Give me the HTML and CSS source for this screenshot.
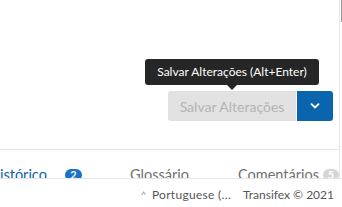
FILE: index.html
```html
<!DOCTYPE html>
<html lang="pt">
<head>
<meta charset="utf-8">
<link rel="stylesheet" href="styles.css">
</head>
<body>
<div class="page">
  <div class="panel">
    <div class="actions">
      <div class="btn-group">
        <div class="tooltip">Salvar Alterações (Alt+Enter)</div>
        <button class="btn-save" disabled>Salvar Alterações</button>
        <button class="btn-drop" aria-label="Mais opções">
          <svg width="10" height="6" viewBox="0 0 10 6"><path d="M1.5 1.2 L5 4.5 L8.5 1.2" fill="none" stroke="#fff" stroke-width="1.8" stroke-linecap="round" stroke-linejoin="round"/></svg>
        </button>
      </div>
    </div>
    <div class="tabs">
      <div class="tab active">Histórico <span class="badge blue">2</span></div>
      <div class="tab">Glossário</div>
      <div class="tab">Comentários <span class="badge gray">5</span></div>
    </div>
  </div>
  <div class="scrollthumb"></div>
  <footer class="footer">
    <span class="lang"><span class="caret">^</span> Portuguese (...</span>
    <span class="copy">Transifex © 2021</span>
  </footer>
</div>
</body>
</html>
```
FILE: styles.css
```css
* { box-sizing: border-box; }
html, body { margin: 0; padding: 0; background: #fff; }
body { font-family: Lato, "Open Sans", sans-serif; width: 342px; height: 207px; overflow: hidden; }
.page { position: relative; width: 342px; height: 207px; }
.panel {
  width: 340px;
  height: 178px;
  border-right: 1px solid #e6e6e6;
  display: flex;
  flex-direction: column;
}
.actions {
  height: 150px;
  flex: none;
  display: flex;
  justify-content: flex-end;
  align-items: flex-start;
  padding: 91px 6px 0 0;
  border-bottom: 1px solid #e4e4e4;
}
.btn-group { position: relative; display: flex; height: 30px; }
.btn-save {
  width: 128px;
  height: 30px;
  border: 0;
  margin: 0;
  border-radius: 3px 0 0 3px;
  background: #e2e2e2;
  color: #b4b4b4;
  font-family: inherit;
  font-size: 14px;
  padding: 0;
}
.btn-drop {
  width: 36px;
  height: 30px;
  margin: 0 0 0 1px;
  border: 0;
  border-radius: 0 3px 3px 0;
  background: #0b64ae;
  display: flex;
  align-items: center;
  justify-content: center;
  padding: 0;
}
.tooltip {
  position: absolute;
  left: -23px;
  top: -32px;
  width: 174px;
  height: 26px;
  background: #262626;
  color: #fff;
  border-radius: 3px;
  font-size: 12px;
  line-height: 26px;
  text-align: center;
  white-space: nowrap;
}
.tooltip::after {
  content: "";
  position: absolute;
  left: 82px;
  bottom: -5px;
  border-left: 5px solid transparent;
  border-right: 5px solid transparent;
  border-top: 5px solid #262626;
}
.tabs {
  flex: 1;
  display: flex;
  overflow: hidden;
  padding-top: 16px;
  margin-left: -11px;
  font-size: 14.5px;
  line-height: 18px;
  color: #707070;
}
.tab { white-space: nowrap; display: flex; align-items: center; height: 18px; flex: none; }
.tab.active { color: #0b64ae; width: 141px; }
.tab:nth-child(2) { width: 108px; }
.badge {
  display: inline-block;
  color: #fff;
  font-size: 11px;
  font-weight: bold;
  line-height: 12px;
  height: 12px;
  border-radius: 6px;
  text-align: center;
  margin-left: 5px;
  position: relative;
  top: 0;
}
.badge.blue { background: #1a73c9; width: 17px; margin-left: 18px; }
.badge.gray { background: #d5d5d5; width: 16px; margin-left: 4px; }
.scrollthumb {
  position: absolute;
  right: 0;
  top: 0;
  width: 1px;
  height: 22px;
  background: #9a9a9a;
}
.footer {
  height: 29px;
  border-top: 1px solid #e6e6e6;
  display: flex;
  justify-content: flex-end;
  align-items: center;
  gap: 12px;
  padding: 2px 8px 0 0;
  font-size: 12px;
  color: #555;
}
.lang { letter-spacing: 0.3px; }
.caret { display: inline-block; font-size: 9px; color: #888; vertical-align: 1px; margin-right: 2px; }
```
